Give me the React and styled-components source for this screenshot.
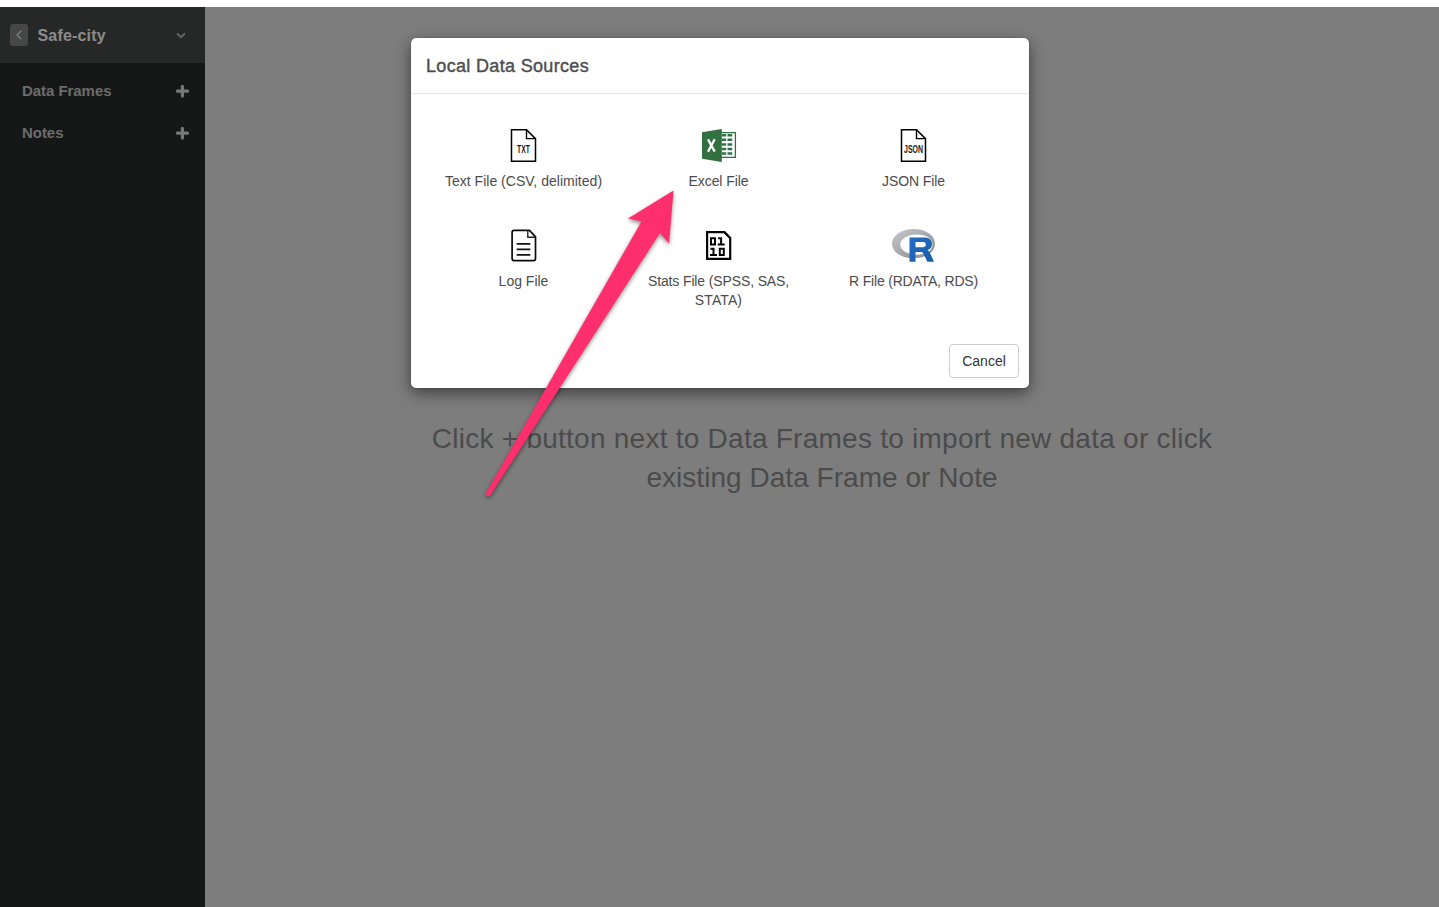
import React from "react";
import styled, { createGlobalStyle } from "styled-components";

const GlobalStyle = createGlobalStyle`
  * { box-sizing: border-box; }
  html, body { margin: 0; background: #fff; overflow: hidden; }
  body { font-family: "Liberation Sans", Arial, sans-serif; font-size: 14px; }
  svg { display: block; }
`;

const Page = styled.div`
  position: relative;
  height: 907px;
  padding-top: 7px;
  overflow: hidden;
`;

const Workspace = styled.div`
  display: flex;
  height: 900px;
  background: #7d7d7d;
`;

const Sidebar = styled.aside`
  width: 205px;
  flex: none;
  background: #161817;
`;

const ProjectBar = styled.header`
  display: flex;
  align-items: center;
  height: 56px;
  padding: 0 19px 0 10px;
  background: #262827;
  color: #8c8c8c;
`;

const BackButton = styled.button`
  display: grid;
  place-items: center;
  width: 18px;
  height: 22px;
  padding: 0;
  border: 0;
  border-radius: 3px;
  background: #474747;
`;

const ProjectName = styled.span`
  flex: 1;
  margin-left: 9.5px;
  padding-top: 2px;
  font-size: 16px;
  font-weight: bold;
  line-height: 20px;
  letter-spacing: 0.17px;
`;

const SectionList = styled.nav`
  padding: 7px 16px 0 22px;
`;

const Section = styled.div`
  display: flex;
  align-items: center;
  justify-content: space-between;
  height: 42px;
`;

const SectionName = styled.span`
  padding-bottom: 2px;
  color: #6c6c6c;
  font-size: 15px;
  font-weight: bold;
  letter-spacing: ${(p) => p.$spacing}px;
`;

const Main = styled.main`
  flex: 1;
  padding-top: 412px;
`;

const Hint = styled.p`
  margin: 0;
  color: #4b4b4b;
  font-size: 28px;
  line-height: 39px;
  text-align: center;
`;

const HintLine = styled.span`
  display: block;
  white-space: nowrap;
  letter-spacing: ${(p) => p.$spacing}px;
`;

const Dialog = styled.section`
  position: absolute;
  left: 411px;
  top: 38px;
  width: 618px;
  height: 350px;
  display: flex;
  flex-direction: column;
  border-radius: 5px;
  background: #fff;
  box-shadow: 0 0 1px rgba(0, 0, 0, 0.6), 0 5px 15px rgba(0, 0, 0, 0.5);
`;

const DialogTitle = styled.h4`
  height: 56px;
  margin: 0;
  padding: 15px 15px 0;
  border-bottom: 1px solid #e5e5e5;
  color: #4d4d4d;
  font-size: 18px;
  font-weight: normal;
  line-height: 26px;
  letter-spacing: 0.33px;
  -webkit-text-stroke: 0.4px #4d4d4d;
`;

const SourceGrid = styled.div`
  flex: 1;
  display: grid;
  grid-template-columns: repeat(3, 195px);
  grid-auto-rows: 100px;
  padding: 32px 15px 0;
`;

const Source = styled.div`
  display: flex;
  flex-direction: column;
  align-items: center;
  color: #4b4b4b;
`;

const IconSlot = styled.div`
  display: grid;
  place-items: center;
  height: 40px;
  margin-bottom: 6px;
`;

const Caption = styled.span`
  font-size: 14px;
  line-height: 19px;
  text-align: center;
  white-space: nowrap;
  letter-spacing: ${(p) => p.$spacing || 0}px;
`;

const DialogFooter = styled.footer`
  display: flex;
  justify-content: flex-end;
  padding: 0 10px 10px;
`;

const CancelButton = styled.button`
  width: 70px;
  height: 34px;
  padding: 0;
  border: 1px solid #ccc;
  border-radius: 4px;
  background: #fff;
  color: #333;
  font: 14px "Liberation Sans", Arial, sans-serif;
`;

const Arrow = styled.svg`
  position: absolute;
  left: 470px;
  top: 180px;
  filter: drop-shadow(0 2px 2px rgba(0, 0, 0, 0.45));
`;

const IconText = styled.text`
  font-family: "Liberation Sans", Arial, sans-serif;
  font-weight: bold;
`;

function PlusIcon() {
  return (
    <svg width="13" height="13" viewBox="0 0 13 13">
      <path d="M6.4 1.5v9.6M1.5 6.1h10" stroke="#787878" strokeWidth="3.2" strokeLinecap="round" />
    </svg>
  );
}

function LabelledFileIcon({ label, width }) {
  return (
    <svg width="41" height="40" viewBox="0.5 1 41 40">
      <path d="M9 4.7H24L33 13.6V36.3H9Z" fill="#fff" stroke="#000" strokeWidth="1.5" />
      <path d="M24 4.7V13.6H33" fill="none" stroke="#000" strokeWidth="1.4" />
      <IconText
        x={21 - width / 2}
        y={28.2}
        fontSize={11}
        textLength={width}
        lengthAdjust="spacingAndGlyphs"
        fill="#1a1a1a"
      >
        {label}
      </IconText>
    </svg>
  );
}

function ExcelIcon() {
  return (
    <svg width="41" height="40" viewBox="-0.5 1 41 40">
      <path d="M22 7.6H36.9V32.4H22" fill="#fff" stroke="#2e7145" strokeWidth="1.3" />
      <path
        d="M23.5 10.2h4.2M23.5 14.8h4.2M23.5 19.4h4.2M23.5 24h4.2M23.5 28.6h4.2M29 10.2h4.7M29 14.8h4.7M29 19.4h4.7M29 24h4.7M29 28.6h4.7"
        stroke="#2e7145"
        strokeWidth="2.5"
      />
      <path d="M3.5 7.3L23.3 4V37L3.5 33.8Z" fill="#33703f" />
      <path d="M9.5 14.4L16.2 26.6M16.2 14.2L9.5 26.8" stroke="#fff" strokeWidth="2.3" />
    </svg>
  );
}

function LogIcon() {
  return (
    <svg width="41" height="40" viewBox="0.5 1 41 40">
      <path
        d="M11.6 5.4H27L33 11.8V33.6Q33 35.7 30.8 35.7H11.6Q9.6 35.7 9.6 33.6V7.5Q9.6 5.4 11.6 5.4Z"
        fill="#fff"
        stroke="#0a0a0a"
        strokeWidth="1.7"
      />
      <path d="M25.3 5.5V12.2H32.8" fill="none" stroke="#222" strokeWidth="1.4" />
      <path d="M14.2 18.9h13.6M14.2 24.4h13.6M14.2 29.9h13.6" stroke="#111" strokeWidth="1.6" />
    </svg>
  );
}

function BinaryIcon() {
  return (
    <svg width="41" height="40" viewBox="0.5 1 41 40" fill="none" stroke="#050505">
      <path d="M9.6 7.2H27L32.7 12.9V33.9H9.6Z" strokeWidth="2.2" />
      <path d="M26 7.4L32.5 14V12L28 7.4Z" fill="#050505" strokeWidth="1" />
      <g strokeWidth="2">
        <path d="M13.5 13.2h4v6.4h-4zM20.6 13.2h3v6.4M20.2 19.6h7" />
        <path d="M13 23.7h3v6.4M12.5 30.1h7M22.3 23.7h4v6.4h-4z" />
      </g>
    </svg>
  );
}

function RIcon() {
  return (
    <svg width="45" height="40" viewBox="-0.5 1 45 40">
      <defs>
        <linearGradient id="ring" x1="0" y1="0" x2="1" y2="1">
          <stop offset="0" stopColor="#c7c9cc" />
          <stop offset="1" stopColor="#85878b" />
        </linearGradient>
        <linearGradient id="letter" x1="0" y1="0" x2="1" y2="1">
          <stop offset="0" stopColor="#276dc3" />
          <stop offset="1" stopColor="#165caa" />
        </linearGradient>
      </defs>
      <path
        fill="url(#ring)"
        fillRule="evenodd"
        d="M22 4C34 4 43.5 10.3 43.5 18.7S34 33.3 22 33.3S.5 27 .5 18.7S10 4 22 4ZM25.3 9.4C16 9.4 8.7 13.9 8.7 19.6S16 29.7 25.3 29.7S41 26 41 19.6S34.6 9.4 25.3 9.4Z"
      />
      <path
        fill="url(#letter)"
        fillRule="evenodd"
        d="M18 12.5H33C37.8 12.5 40.5 15 40.5 19C40.5 22.2 38.8 24.1 36 25.2C37.2 25.8 37.8 26.7 38.5 28L42.5 36.8H35.8L32.5 29.8C31.4 27.5 30.8 27 28.8 27H24V36.8H18ZM24 17V22.3H31C33.3 22.3 34.4 21.4 34.4 19.6S33.3 17 31 17Z"
      />
    </svg>
  );
}

const SOURCES = [
  {
    icon: <LabelledFileIcon label="TXT" width={12.8} />,
    lines: [{ text: "Text File (CSV, delimited)", spacing: 0.02 }],
  },
  { icon: <ExcelIcon />, lines: [{ text: "Excel File", spacing: -0.08 }] },
  {
    icon: <LabelledFileIcon label="JSON" width={19} />,
    lines: [{ text: "JSON File", spacing: -0.1 }],
  },
  { icon: <LogIcon />, lines: [{ text: "Log File", spacing: 0 }] },
  {
    icon: <BinaryIcon />,
    lines: [
      { text: "Stats File (SPSS, SAS,", spacing: -0.13 },
      { text: "STATA)", spacing: 0.1 },
    ],
  },
  { icon: <RIcon />, lines: [{ text: "R File (RDATA, RDS)", spacing: -0.19 }] },
];

export default function App() {
  return (
    <Page>
      <GlobalStyle />
      <Workspace>
        <Sidebar>
          <ProjectBar>
            <BackButton aria-label="Back">
              <svg width="6" height="10" viewBox="0 0 6 10">
                <path d="M5.3 0.8L1 5L5.3 9.2" fill="none" stroke="#858585" strokeWidth="1.2" />
              </svg>
            </BackButton>
            <ProjectName>Safe-city</ProjectName>
            <svg width="10" height="7" viewBox="0 0 10 7">
              <path d="M1 1.4L5 5.2L9 1.4" fill="none" stroke="#686868" strokeWidth="1.9" />
            </svg>
          </ProjectBar>
          <SectionList>
            <Section>
              <SectionName $spacing={-0.05}>Data Frames</SectionName>
              <PlusIcon />
            </Section>
            <Section>
              <SectionName $spacing={-0.05}>Notes</SectionName>
              <PlusIcon />
            </Section>
          </SectionList>
        </Sidebar>
        <Main>
          <Hint>
            <HintLine $spacing={0.25}>Click + button next to Data Frames to import new data or click</HintLine>
            <HintLine $spacing={0.04}>existing Data Frame or Note</HintLine>
          </Hint>
        </Main>
      </Workspace>
      <Dialog role="dialog">
        <DialogTitle>Local Data Sources</DialogTitle>
        <SourceGrid>
          {SOURCES.map(({ icon, lines }) => (
            <Source key={lines[0].text}>
              <IconSlot>{icon}</IconSlot>
              {lines.map(({ text, spacing }) => (
                <Caption key={text} $spacing={spacing}>
                  {text}
                </Caption>
              ))}
            </Source>
          ))}
        </SourceGrid>
        <DialogFooter>
          <CancelButton>Cancel</CancelButton>
        </DialogFooter>
      </Dialog>
      <Arrow width="220" height="330" viewBox="0 0 220 330">
        <path
          d="M203.5 10.5L158 38.5L171.5 41.5L16 313Q15.5 316 18 316Q20 316 20.8 314.5L190 53L199 63.5Z"
          fill="#ff2e6c"
        />
      </Arrow>
    </Page>
  );
}
